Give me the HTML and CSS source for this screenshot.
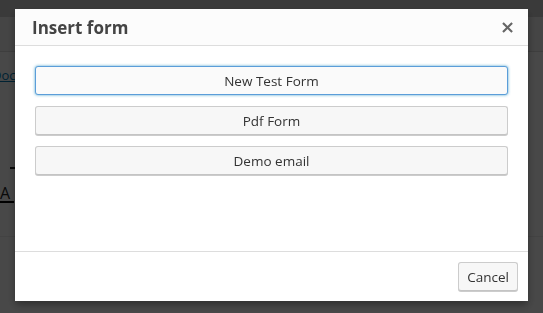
FILE: index.html
```html
<!DOCTYPE html>
<html lang="en">
<head>
  <meta charset="UTF-8" />
  <meta name="viewport" content="width=device-width, initial-scale=1.0">
  <title>Insert form</title>
  <link rel="stylesheet" href="styles.css">
</head>
<body>
  <div class="page">
    <div class="topbar"></div>
    <div class="page-head"></div>
    <div class="page-body">
      <a class="doc-link" href="#">Doc</a>
      <div class="dash"></div>
      <div class="letter">A</div>
    </div>
    <div class="page-foot"></div>
  </div>

  <div class="backdrop"></div>

  <div class="modal">
    <div class="modal-header">
      <h2>Insert form</h2>
      <button class="close">&times;</button>
    </div>
    <div class="modal-body">
      <button class="form-btn focused">New Test Form</button>
      <button class="form-btn">Pdf Form</button>
      <button class="form-btn">Demo email</button>
    </div>
    <div class="modal-footer">
      <button class="form-btn cancel">Cancel</button>
    </div>
  </div>
</body>
</html>
```

FILE: styles.css
```css
body {
  margin: 0;
  font-family: "Open Sans", "Noto Sans", sans-serif;
  background: #fff;
  height: 313px;
  overflow: hidden;
}
.page {
  height: 313px;
  display: flex;
  flex-direction: column;
}
.topbar {
  height: 17px;
  background: #c4c4c4;
}
.page-head {
  height: 34px;
  background: #e6e6e6;
  border-bottom: 1px solid #d0d0d0;
}
.page-body {
  height: 184px;
  background: #f2f2f2;
}
.doc-link {
  display: block;
  margin-top: 14px;
  margin-left: -8px;
  font-size: 13px;
  color: #0073aa;
}
.dash {
  width: 14px;
  height: 2px;
  background: #222;
  margin: 83px 0 0 10px;
}
.letter {
  margin: 16px 0 0 0;
  font-size: 16px;
  color: #222;
  border-bottom: 2px solid #000;
  width: 14px;
  line-height: 16px;
}
.page-foot {
  flex: 1;
  background: #f2f2f2;
  border-top: 1px solid #e0e0e0;
}
.backdrop {
  position: fixed;
  inset: 0;
  background: rgba(0, 0, 0, 0.7);
}
.modal {
  position: fixed;
  left: 15px;
  top: 9px;
  width: 513px;
  height: 292px;
  background: #fff;
  box-shadow: 0 4px 8px rgba(0, 0, 0, 0.35);
  display: flex;
  flex-direction: column;
}
.modal-header {
  height: 36px;
  border-bottom: 1px solid #ddd;
  display: flex;
  align-items: center;
  justify-content: space-between;
  padding: 0 13px 0 17px;
  background: #fcfcfc;
}
.modal-header h2 {
  margin: 0;
  font-size: 17px;
  font-weight: bold;
  color: #444;
}
.close {
  border: none;
  background: none;
  font-size: 18px;
  font-weight: bold;
  color: #666;
  padding: 0;
  line-height: 18px;
  font-family: "DejaVu Sans", sans-serif;
}
.modal-body {
  flex: 1;
  padding: 20px 20px 0;
  display: flex;
  flex-direction: column;
  gap: 11px;
}
.form-btn {
  height: 29px;
  background: #f7f7f7;
  border: 1px solid #ccc;
  border-bottom-color: #c4c4c4;
  border-radius: 3px;
  box-shadow: 0 1px 0 #ccc;
  font-family: "Open Sans", "Noto Sans", sans-serif;
  font-size: 13.5px;
  color: #333;
  padding: 0 10px;
}
.form-btn.focused {
  border-color: #5b9dd9;
  box-shadow: 0 0 3px rgba(30, 140, 190, 0.8);
  background: #fafafa;
}
.modal-footer {
  height: 49px;
  border-top: 1px solid #ddd;
  display: flex;
  justify-content: flex-end;
  align-items: center;
  padding: 0 10px;
}
.cancel {
  height: 29px;
  width: 60px;
  padding: 0;
}
```
